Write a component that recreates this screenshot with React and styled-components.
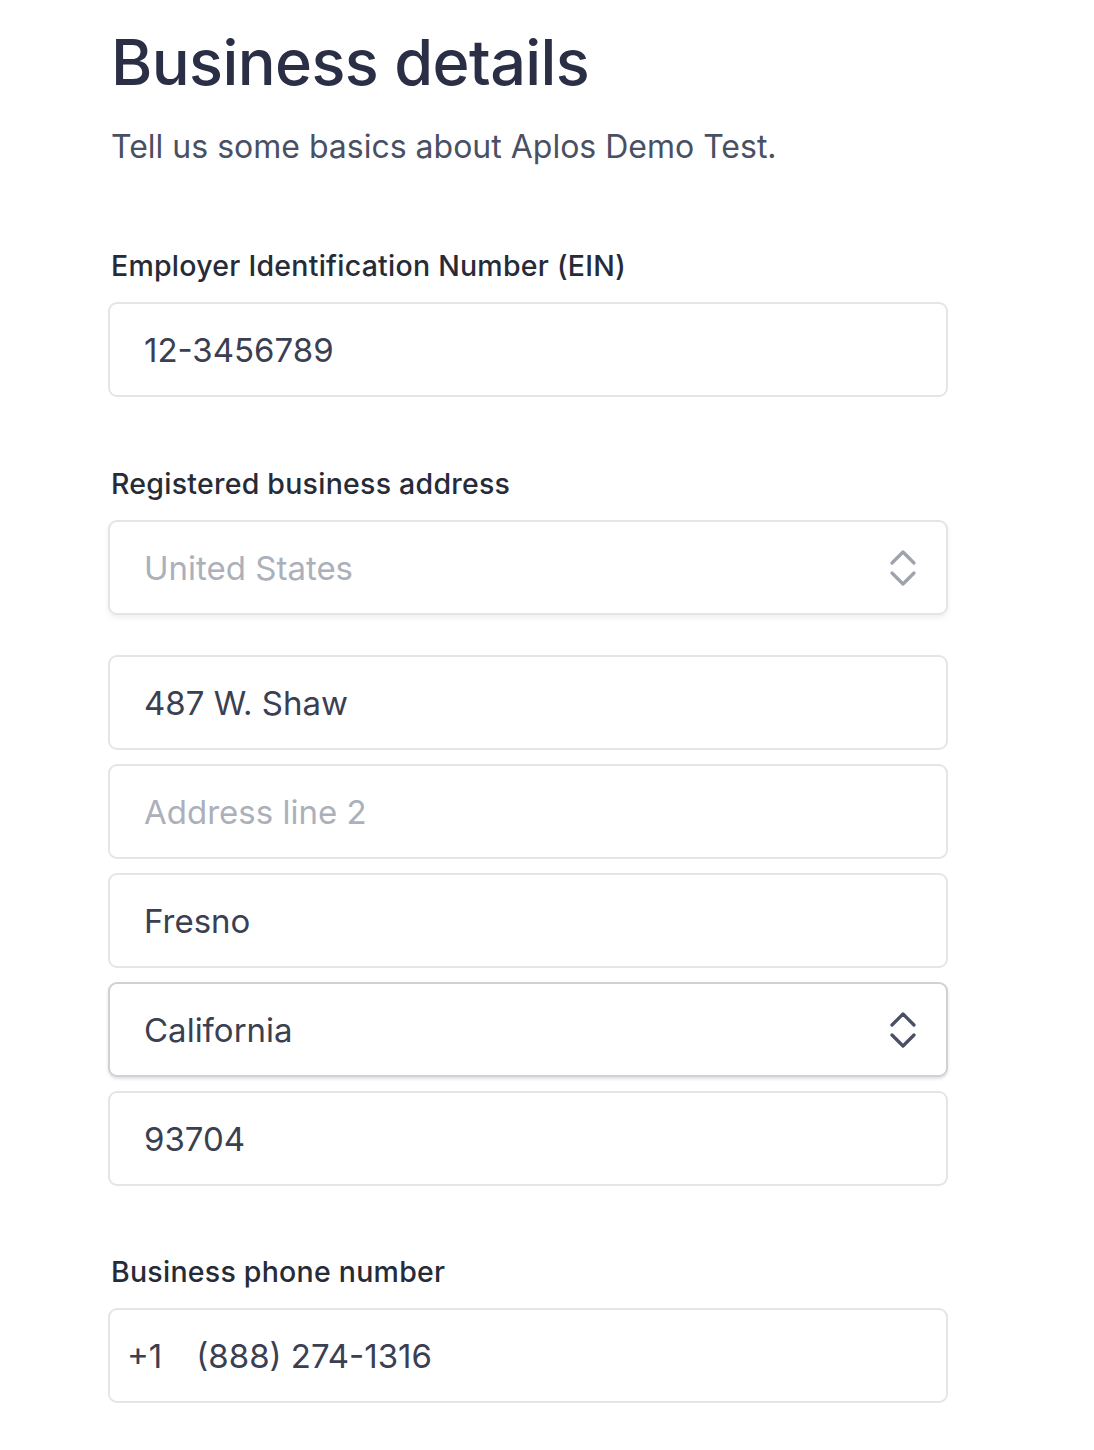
import React from 'react';
import styled, { createGlobalStyle } from 'styled-components';

const GlobalStyle = createGlobalStyle`
	body {
		margin: 0;
		background: #fff;
		font-family: Inter, 'Noto Sans', 'Liberation Sans', sans-serif;
		-webkit-font-smoothing: antialiased;
	}
`;

const Chevrons = () => (
	<svg width='28' height='38' viewBox='0 0 28 38' fill='none'>
		<path
			d='M3 14 L14 3 L25 14 M3 24 L14 35 L25 24'
			stroke='currentColor'
			strokeWidth='3.2'
			strokeLinecap='round'
			strokeLinejoin='round'
		/>
	</svg>
);

const App = () => {
	return (
		<Page>
			<GlobalStyle />
			<Title>Business details</Title>
			<Subtitle>Tell us some basics about Aplos Demo Test.</Subtitle>

			<Section first>
				<Label>Employer Identification Number (EIN)</Label>
				<Field>
					<Value>12-3456789</Value>
				</Field>
			</Section>

			<Section>
				<Label>Registered business address</Label>
				<Field select>
					<Value muted>United States</Value>
					<Arrow muted>
						<Chevrons />
					</Arrow>
				</Field>
				<Stack>
					<Field>
						<Value>487 W. Shaw</Value>
					</Field>
					<Field>
						<Value muted>Address line 2</Value>
					</Field>
					<Field>
						<Value>Fresno</Value>
					</Field>
					<Field select dark>
						<Value>California</Value>
						<Arrow>
							<Chevrons />
						</Arrow>
					</Field>
					<Field>
						<Value>93704</Value>
					</Field>
				</Stack>
			</Section>

			<Section last>
				<Label>Business phone number</Label>
				<Field phone>
					<Prefix>+1</Prefix>
					<Value>(888) 274-1316</Value>
				</Field>
			</Section>
		</Page>
	);
};

export default App;

const Page = styled.div`
	padding: 22px 0 40px 108px;
	width: 840px;
`;

const Title = styled.h1`
	margin: 0 0 0 3px;
	font-size: 63px;
	line-height: 80px;
	font-weight: 500;
	color: #2a2f45;
	letter-spacing: -0.6px;
`;

const Subtitle = styled.p`
	margin: 23px 0 0 3px;
	font-size: 32px;
	line-height: 44px;
	font-weight: 400;
	color: #4a5064;
`;

const Section = styled.div`
	margin-top: ${(p) => (p.first ? 80 : p.last ? 69 : 70)}px;
`;

const Label = styled.div`
	margin: 0 0 19px 3px;
	font-size: 28.5px;
	line-height: 34px;
	font-weight: 500;
	letter-spacing: 0.25px;
	color: #262b38;
`;

const Stack = styled.div`
	margin-top: 40px;
	display: flex;
	flex-direction: column;
	gap: 14px;
`;

const Field = styled.div`
	box-sizing: border-box;
	height: 95px;
	display: flex;
	align-items: center;
	padding: 0 ${(p) => (p.phone ? 17 : 34)}px;
	gap: 34px;
	border: 2px solid ${(p) => (p.dark ? '#cfd1d7' : '#e4e5e9')};
	border-radius: 9px;
	background: #fff;
	box-shadow: ${(p) =>
		p.select
			? p.dark
				? '0 2px 3px rgba(40, 45, 60, 0.14)'
				: '0 3px 5px rgba(40, 45, 60, 0.08)'
			: 'none'};
`;

const Value = styled.span`
	flex: 1;
	font-size: 33px;
	color: ${(p) => (p.muted ? '#acb0ba' : '#3a4052')};
`;

const Prefix = styled.span`
	font-size: 33px;
	color: #3a4052;
`;

const Arrow = styled.span`
	display: flex;
	margin-right: -5px;
	color: ${(p) => (p.muted ? '#9ea2ad' : '#4a5064')};
`;
